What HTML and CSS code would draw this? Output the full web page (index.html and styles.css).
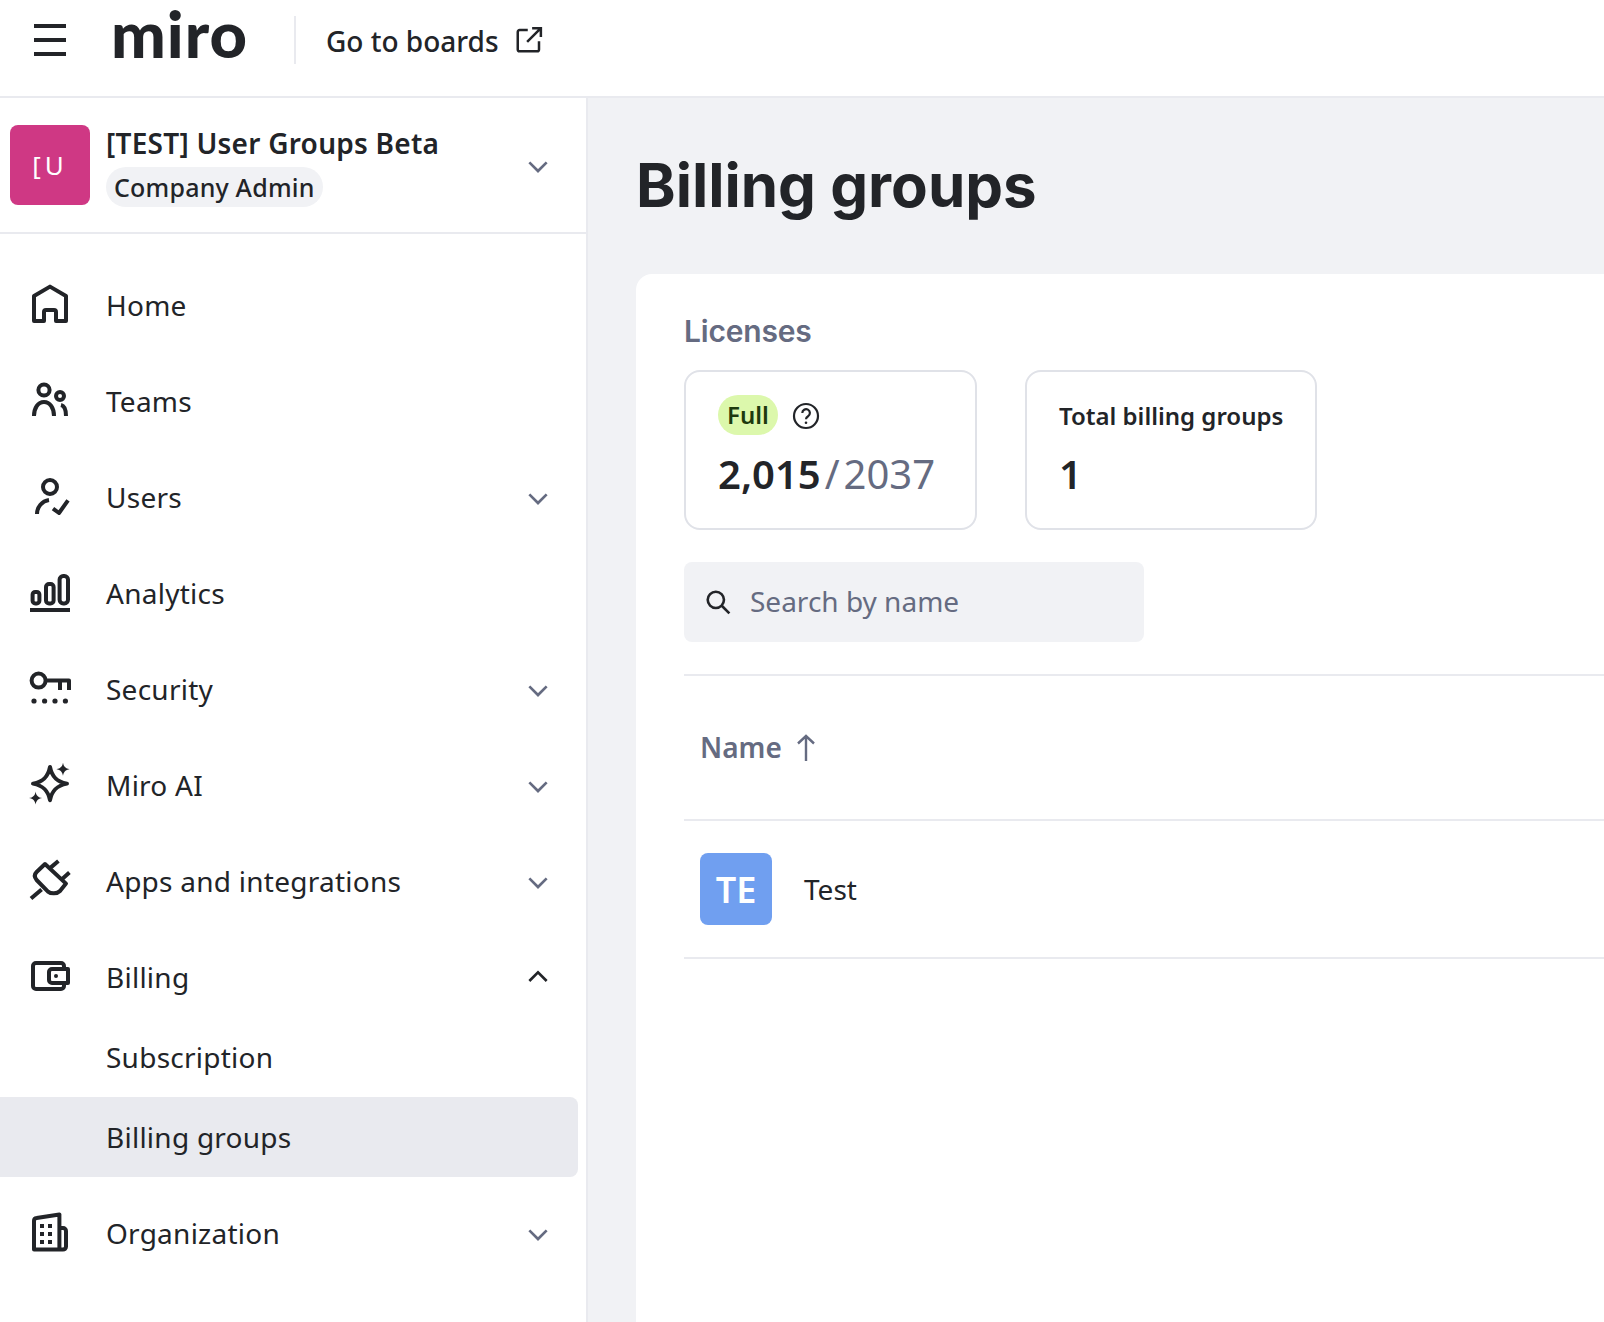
FILE: index.html
```html
<!DOCTYPE html>
<html lang="en">
<head>
  <meta charset="UTF-8">
  <title>Billing groups</title>
  <link rel="stylesheet" href="styles.css">
</head>
<body>
  <!-- Top bar -->
  <header class="topbar">
    <svg class="burger" viewBox="0 0 32 32" width="32" height="32"><path d="M0 2h32M0 16h32M0 30h32"/></svg>
    <span class="logo">miro</span>
    <span class="topbar-divider"></span>
    <a href="#" class="boards-link">Go to boards</a>
    <svg class="icon-external" viewBox="0 0 24 24" width="30" height="30"><path d="M11 4H4.500A1.500 1.500 0 0 0 3 5.500v14A1.500 1.500 0 0 0 4.500 21h14a1.500 1.500 0 0 0 1.500-1.500V13M10.500 13.500L21.500 2.500M14.500 2.500h7v7"/></svg>
  </header>

  <div class="layout">
    <!-- Sidebar -->
    <aside class="sidebar">
      <div class="org">
        <div class="org-avatar">[U</div>
        <div class="org-info">
          <div class="org-name">[TEST] User Groups Beta</div>
          <span class="org-role">Company Admin</span>
        </div>
        <svg class="chevron" viewBox="0 0 24 24" width="32" height="32"><path d="M5.500 8.500l6.500 6.500 6.500-6.500"/></svg>
      </div>

      <nav class="nav">
        <a href="#" class="nav-item">
          <svg class="nav-icon" viewBox="0 0 24 24"><path d="M4 20V7.500L12 2.800l8 4.700V20h-5v-4.500a1 1 0 0 0-1-1h-4a1 1 0 0 0-1 1V20z"/></svg>
          <span class="nav-label">Home</span>
        </a>
        <a href="#" class="nav-item">
          <svg class="nav-icon" viewBox="0 0 24 24"><circle cx="9" cy="6.500" r="2.800"/><circle cx="17" cy="9.500" r="2"/><path d="M4 19.500c0-4 2-7 5-7s5 3 5 7M17.500 14c1.700.4 2.500 2.500 2.500 5.500"/></svg>
          <span class="nav-label">Teams</span>
        </a>
        <a href="#" class="nav-item">
          <svg class="nav-icon" viewBox="0 0 24 24"><circle cx="12" cy="7" r="3.500"/><path d="M5.500 20.500c0-3.500 2.500-6.500 6-7M13.500 17.800l3 2.200 4.500-6.300"/></svg>
          <span class="nav-label">Users</span>
          <svg class="chevron" viewBox="0 0 24 24" width="32" height="32"><path d="M5.500 8.500l6.500 6.500 6.500-6.500"/></svg>
        </a>
        <a href="#" class="nav-item">
          <svg class="nav-icon" viewBox="0 0 24 24"><path d="M2 20.500h20"/><rect x="3.300" y="11.500" width="3.400" height="5.700" rx="1.300"/><rect x="10" y="7.500" width="3.800" height="9.700" rx="1.500"/><rect x="16.800" y="3.500" width="4.200" height="13.700" rx="1.800"/></svg>
          <span class="nav-label">Analytics</span>
        </a>
        <a href="#" class="nav-item">
          <svg class="nav-icon" viewBox="0 0 24 24"><circle cx="6.300" cy="7.800" r="3.500"/><path d="M9.800 7.800h11.700v4.700M17 7.800v4.700"/><g class="solid"><circle cx="4" cy="18" r="1.300"/><circle cx="9.300" cy="18" r="1.300"/><circle cx="14.500" cy="18" r="1.300"/><circle cx="19.700" cy="18" r="1.300"/></g></svg>
          <span class="nav-label">Security</span>
          <svg class="chevron" viewBox="0 0 24 24" width="32" height="32"><path d="M5.500 8.500l6.500 6.500 6.500-6.500"/></svg>
        </a>
        <a href="#" class="nav-item">
          <svg class="nav-icon" viewBox="0 0 24 24"><path d="M12 3c.9 4.700 3.200 7.300 8.500 8.300-5.300 1-7.600 3.600-8.500 8.300-.9-4.700-3.200-7.300-8.500-8.300 5.300-1 7.600-3.600 8.500-8.300z"/><path class="solid" d="M18.500.8c.3 2 1.300 3 3.300 3.300-2 .3-3 1.300-3.300 3.300-.3-2-1.300-3-3.300-3.300 2-.3 3-1.300 3.300-3.300zM4.800 15.200c.3 2 1.300 3 3.300 3.300-2 .3-3 1.300-3.300 3.300-.3-2-1.300-3-3.300-3.300 2-.3 3-1.300 3.300-3.300z"/></svg>
          <span class="nav-label">Miro AI</span>
          <svg class="chevron" viewBox="0 0 24 24" width="32" height="32"><path d="M5.500 8.500l6.500 6.500 6.500-6.500"/></svg>
        </a>
        <a href="#" class="nav-item">
          <svg class="nav-icon" viewBox="0 0 24 24"><path d="M9.500 3.500L20 13.300l-3 3.700c-1.500 1.500-4.500 1.500-6 .3l-5.700-5.800c-1.200-1.500-1-3 0-4zM7.800 16.200l-5.300 4.600M16.200 2l-3.900 3.300M21.700 7.800l-3.900 3.400"/></svg>
          <span class="nav-label">Apps and integrations</span>
          <svg class="chevron" viewBox="0 0 24 24" width="32" height="32"><path d="M5.500 8.500l6.500 6.500 6.500-6.500"/></svg>
        </a>

        <div class="nav-group">
          <a href="#" class="nav-item">
            <svg class="nav-icon" viewBox="0 0 24 24"><path d="M19 7.500v-1A1.500 1.500 0 0 0 17.500 5H5a1.500 1.500 0 0 0-1.500 1.500v10A1.500 1.500 0 0 0 5 18h12.500a1.500 1.500 0 0 0 1.500-1.500v-1M11.500 9.500A1.500 1.500 0 0 1 13 8h8v7h-8a1.500 1.500 0 0 1-1.500-1.500z"/><circle class="solid" cx="15" cy="11.500" r="1"/></svg>
            <span class="nav-label">Billing</span>
            <svg class="chevron chevron-open" viewBox="0 0 24 24" width="32" height="32"><path d="M5.500 15l6.500-6.500 6.500 6.500"/></svg>
          </a>
          <a href="#" class="nav-sub">Subscription</a>
          <a href="#" class="nav-sub active">Billing groups</a>
        </div>

        <a href="#" class="nav-item">
          <svg class="nav-icon" viewBox="0 0 24 24"><path d="M4 20.300V6a1.500 1.500 0 0 1 1.300-1.500L16.700 2.700v17.600zM16.700 9.500h1.800a1.500 1.500 0 0 1 1.500 1.500v7.800a1.500 1.500 0 0 1-1.500 1.500H4"/><g class="solid"><rect x="7" y="7.500" width="2" height="2"/><rect x="11" y="7.500" width="2" height="2"/><rect x="7" y="11.500" width="2" height="2"/><rect x="11" y="11.500" width="2" height="2"/><rect x="7" y="15.500" width="2" height="2"/><rect x="11" y="15.500" width="2" height="2"/></g></svg>
          <span class="nav-label">Organization</span>
          <svg class="chevron" viewBox="0 0 24 24" width="32" height="32"><path d="M5.500 8.500l6.500 6.500 6.500-6.500"/></svg>
        </a>
      </nav>
    </aside>

    <!-- Main Content -->
    <main class="main">
      <h1 class="page-title">Billing groups</h1>
      <section class="panel">
        <h2 class="panel-title">Licenses</h2>

        <div class="stats">
          <div class="stat">
            <div class="stat-head">
              <span class="pill">Full</span>
              <svg class="icon-help" viewBox="0 0 28 28" width="28" height="28"><circle cx="14" cy="14" r="12"/><path d="M10.300 11a3.800 3.800 0 1 1 5.800 3.200c-1.400.9-2.100 1.500-2.100 3"/><circle class="solid" cx="14" cy="20.700" r="1.300"/></svg>
            </div>
            <div class="stat-value">2,015<span class="stat-total"><span class="stat-slash">/</span>2037</span></div>
          </div>
          <div class="stat stat-narrow">
            <div class="stat-head"><span class="stat-label">Total billing groups</span></div>
            <div class="stat-value">1</div>
          </div>
        </div>

        <div class="search">
          <svg class="icon-search" viewBox="0 0 24 24" width="26" height="26"><circle cx="10" cy="10" r="7.500"/><path d="M15.500 15.500l7 7"/></svg>
          <span class="search-text">Search by name</span>
        </div>

        <div class="table-head">
          <span>Name</span>
          <svg class="icon-sort" viewBox="0 0 24 28" width="24" height="28"><path d="M12 27V2M4 9.500L12 2l8 7.500"/></svg>
        </div>
        <div class="table-row">
          <div class="group-avatar">TE</div>
          <span class="group-name">Test</span>
        </div>
      </section>
    </main>
  </div>
</body>
</html>
```

FILE: styles.css
```css
* {
  box-sizing: border-box;
  margin: 0;
  padding: 0;
}

body {
  font-family: "Noto Sans", sans-serif;
  color: #222428;
  background-color: #fff;
  height: 100vh;
  overflow: hidden;
  display: flex;
  flex-direction: column;
}

a {
  color: inherit;
  text-decoration: none;
}

svg {
  fill: none;
  stroke: currentColor;
  flex-shrink: 0;
}

svg .solid {
  fill: currentColor;
  stroke: none;
}

/* Top bar */
.topbar {
  height: 98px;
  flex-shrink: 0;
  display: flex;
  align-items: center;
  border-bottom: 2px solid #e9eaef;
  padding-left: 34px;
  padding-bottom: 16px;
}

.burger {
  stroke-width: 4;
}

.logo {
  font-family: "Lato", sans-serif;
  font-weight: 900;
  font-size: 65px;
  line-height: 50px;
  margin-left: 45px;
  margin-bottom: 14px;
  letter-spacing: 1px;
}

.topbar-divider {
  width: 2px;
  height: 48px;
  background-color: #e9eaef;
  margin-left: 46px;
}

.boards-link {
  font-size: 28px;
  font-weight: 500;
  margin-left: 30px;
  margin-top: 2px;
}

.icon-external {
  stroke-width: 2;
  margin-left: 15px;
}

/* Sidebar */
.layout {
  flex: 1;
  display: flex;
  min-height: 0;
}

.sidebar {
  width: 588px;
  flex-shrink: 0;
  border-right: 2px solid #e9eaef;
}

.org {
  height: 136px;
  display: flex;
  align-items: center;
  padding-left: 10px;
  border-bottom: 2px solid #e9eaef;
}

.org-avatar {
  width: 80px;
  height: 80px;
  border-radius: 8px;
  background-color: #cf3884;
  color: #fff;
  font-size: 26px;
  letter-spacing: 4px;
  display: flex;
  align-items: center;
  justify-content: center;
}

.org-info {
  flex: 1;
  margin-left: 16px;
}

.org-name {
  font-size: 28px;
  font-weight: 600;
  line-height: 40px;
  letter-spacing: 0.25px;
}

.org-role {
  display: inline-block;
  font-size: 25px;
  font-weight: 500;
  line-height: 40px;
  letter-spacing: 0.2px;
  padding: 0 8px;
  margin-top: 4px;
  border-radius: 20px;
  background-color: #f1f2f5;
}

.chevron {
  stroke: #656b81;
  stroke-width: 2;
  margin-left: auto;
  margin-right: 32px;
  margin-top: 3px;
}

.chevron-open {
  stroke: #222428;
  margin-top: 0;
}

.nav {
  padding-top: 31px;
}

.nav-item {
  height: 80px;
  display: flex;
  align-items: center;
  padding-left: 26px;
  margin-bottom: 16px;
}

.nav-group .nav-item {
  margin-bottom: 0;
}

.nav-group {
  margin-bottom: 16px;
}

.nav-icon {
  width: 48px;
  height: 48px;
  stroke-width: 2;
  stroke-linejoin: round;
}

.nav-label {
  font-size: 28px;
  letter-spacing: 0.25px;
  margin-left: 32px;
}

.nav-sub {
  display: flex;
  align-items: center;
  height: 80px;
  padding-left: 106px;
  margin-right: 8px;
  font-size: 28px;
  letter-spacing: 0.25px;
  border-radius: 0 8px 8px 0;
}

.nav-sub.active {
  background-color: #e9eaef;
}

/* Main Content */
.main {
  flex: 1;
  min-width: 0;
  background-color: #f1f2f5;
  padding: 47px 0 0 48px;
  display: flex;
  flex-direction: column;
}

.page-title {
  font-family: "Inter", sans-serif;
  font-size: 60px;
  font-weight: 700;
  line-height: 80px;
  margin-bottom: 49px;
}

.panel {
  flex: 1;
  background-color: #fff;
  border-radius: 16px 0 0 0;
  padding: 37px 0 0 48px;
}

.panel-title {
  font-family: "Inter", sans-serif;
  font-size: 30px;
  font-weight: 600;
  line-height: 40px;
  letter-spacing: -0.2px;
  color: #656b81;
  margin-bottom: 19px;
}

.stats {
  display: flex;
  gap: 48px;
}

.stat {
  width: 293px;
  height: 160px;
  border: 2px solid #e0e2e8;
  border-radius: 16px;
  padding: 23px 0 0 32px;
}

.stat-narrow {
  width: 292px;
}

.stat-head {
  display: flex;
  align-items: center;
  height: 40px;
}

.pill {
  background-color: #dcf8ac;
  color: #1d3a0e;
  font-size: 24px;
  font-weight: 600;
  line-height: 40px;
  padding: 0 9px;
  border-radius: 20px;
}

.icon-help {
  stroke-width: 2.200;
  margin-left: 14px;
  margin-top: 2px;
}

.stat-label {
  font-size: 24px;
  font-weight: 600;
}

.stat-value {
  font-size: 40px;
  font-weight: 600;
  line-height: 56px;
  margin-top: 11px;
}

.stat-total {
  font-weight: 400;
  color: #656b81;
}

.stat-slash {
  margin: 0 4px;
}

.search {
  width: 460px;
  height: 80px;
  margin-top: 32px;
  display: flex;
  align-items: center;
  padding-left: 21px;
  background-color: #f1f2f5;
  border-radius: 8px;
}

.icon-search {
  stroke-width: 2.400;
}

.search-text {
  font-size: 28px;
  line-height: 38px;
  margin-bottom: 2px;
  color: #656b81;
  margin-left: 19px;
}

.table-head {
  height: 147px;
  margin-top: 32px;
  border-top: 2px solid #e9eaef;
  border-bottom: 2px solid #e9eaef;
  display: flex;
  align-items: center;
  padding-left: 16px;
  padding-bottom: 2px;
  font-size: 28px;
  font-weight: 600;
  color: #656b81;
}

.icon-sort {
  stroke-width: 2.400;
  margin-left: 12px;
  margin-top: 2px;
}

.table-row {
  height: 138px;
  border-bottom: 2px solid #e9eaef;
  display: flex;
  align-items: center;
  padding-left: 16px;
}

.group-avatar {
  width: 72px;
  height: 72px;
  border-radius: 8px;
  background-color: #709ff0;
  color: #fff;
  font-size: 36px;
  font-weight: 600;
  display: flex;
  align-items: center;
  justify-content: center;
}

.group-name {
  font-size: 28px;
  margin-left: 32px;
}
```
